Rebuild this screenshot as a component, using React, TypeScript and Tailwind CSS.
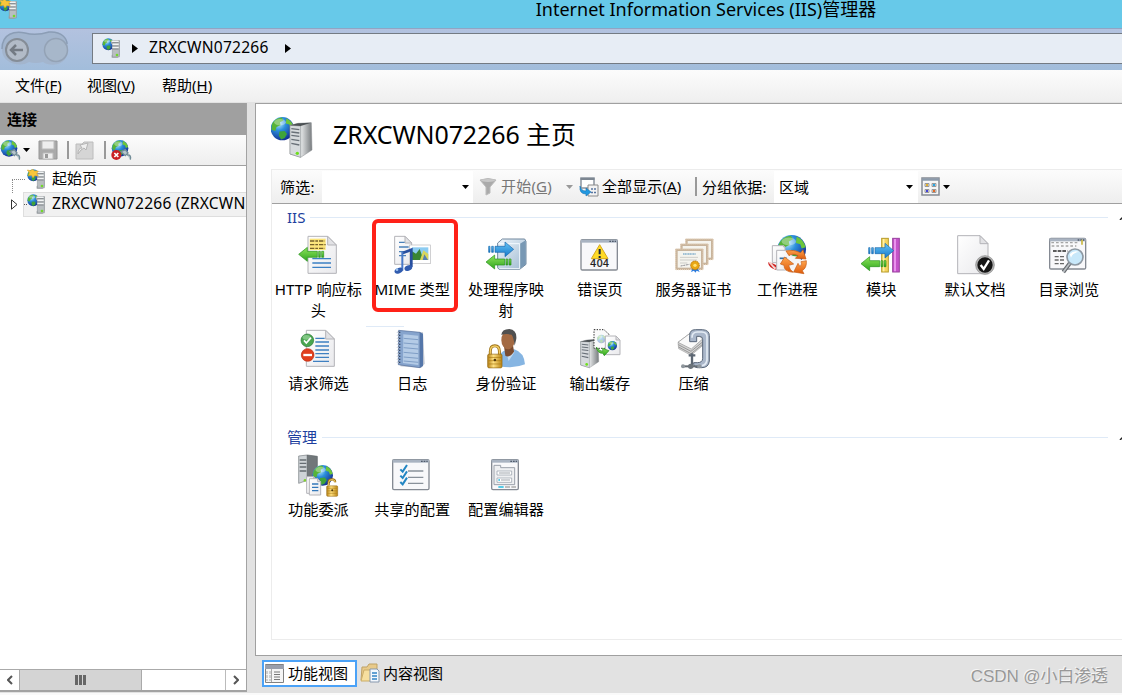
import type { ReactNode } from 'react';

const uiFont = "font-['Noto_Sans','Noto_Sans_CJK_SC',sans-serif]";

function Defs() {
  return (
    <svg width="0" height="0" className="absolute">
      <defs>
        <radialGradient id="globe" cx="35%" cy="28%" r="75%">
          <stop offset="0" stopColor="#b9ebfd" />
          <stop offset="0.4" stopColor="#2c8fdc" />
          <stop offset="1" stopColor="#122f93" />
        </radialGradient>
        <linearGradient id="steel">
          <stop offset="0" stopColor="#8a8f93" />
          <stop offset="0.5" stopColor="#e4e6e7" />
          <stop offset="1" stopColor="#777b7e" />
        </linearGradient>
        <linearGradient id="paper" x2="1" y2="1">
          <stop offset="0" stopColor="#ffffff" />
          <stop offset="1" stopColor="#e9e9ec" />
        </linearGradient>
        <linearGradient id="green" x2="0" y2="1">
          <stop offset="0" stopColor="#8fe55c" />
          <stop offset="1" stopColor="#2fa51f" />
        </linearGradient>
        <linearGradient id="blue" x2="0" y2="1">
          <stop offset="0" stopColor="#65c4f5" />
          <stop offset="1" stopColor="#1779cb" />
        </linearGradient>
        <linearGradient id="gold">
          <stop offset="0" stopColor="#b57f14" />
          <stop offset="0.4" stopColor="#ffe182" />
          <stop offset="1" stopColor="#b98312" />
        </linearGradient>
        <linearGradient id="ice" x2="1" y2="1">
          <stop offset="0" stopColor="#eef5fb" />
          <stop offset="1" stopColor="#9db8d0" />
        </linearGradient>
        <linearGradient id="orange" x2="0" y2="1">
          <stop offset="0" stopColor="#ffa54d" />
          <stop offset="1" stopColor="#de5c0c" />
        </linearGradient>
      </defs>
    </svg>
  );
}

/* Shared pieces, drawn on a 120 unit grid */

function Globe({ x, y, r }: { x: number; y: number; r: number }) {
  return (
    <g transform={`translate(${x} ${y}) scale(${r / 40})`}>
      <circle r="40" fill="url(#globe)" />
      <path d="M-36 -14Q-26 -36 -2 -38L4 -28-8 -22-6 -12-20 -6-24 8-37 4Z" fill="#57b437" />
      <path d="M14 -36Q34 -26 39 -6L28 -2 24 -14 12 -18Z" fill="#6cc63a" />
      <path d="M-10 10L8 8 16 18 8 32-4 37-12 24Z" fill="#3fa33a" />
      <ellipse cx="-8" cy="-22" rx="20" ry="11" fill="#fff" opacity="0.35" />
    </g>
  );
}

function Server({ x, y, s }: { x: number; y: number; s: number }) {
  return (
    <g transform={`translate(${x} ${y}) scale(${s})`}>
      <path d="M0 8L24 2 64 0 66 82 32 104 0 94Z" fill="url(#steel)" stroke="#8b8f92" strokeWidth="1.5" />
      <path d="M0 8L32 10V104L0 94Z" fill="#d6dadd" stroke="#7d8285" strokeWidth="1.5" />
      <path d="M4 18L28 21M4 28L28 31M4 38L28 41M4 50L28 54M4 62L28 67" stroke="#687078" strokeWidth="4" />
      <path d="M0 8L24 2 64 0 32 10Z" fill="#4c5154" />
      <circle cx="22" cy="92" r="5" fill="#6ee01c" />
    </g>
  );
}

function Page({ x, y, w, h, fold = 26 }: { x: number; y: number; w: number; h: number; fold?: number }) {
  return (
    <g strokeLinejoin="round" stroke="#b4b4b8" strokeWidth="3">
      <path d={`M${x} ${y}h${w - fold}l${fold} ${fold}v${h - fold}h${-w}z`} fill="url(#paper)" />
      <path d={`M${x + w - fold} ${y}v${fold}h${fold}z`} fill="#e2e2e5" />
    </g>
  );
}

function WindowFrame({ x, y, w, h }: { x: number; y: number; w: number; h: number }) {
  return (
    <g>
      <rect x={x} y={y} width={w} height={h} rx="4" fill="#f8f8fa" stroke="#858a93" strokeWidth="4" />
      <rect x={x} y={y} width={w} height="9" fill="#a9b3c1" />
      <path d={`M${x + w - 24} ${y + 5}h20`} stroke="#4f5a6b" strokeWidth="4" strokeDasharray="5 3" />
    </g>
  );
}

function ArrowLeft({ x, y }: { x: number; y: number }) {
  return (
    <g transform={`translate(${x} ${y})`} fill="url(#green)" stroke="#249019" strokeWidth="2" strokeLinejoin="round">
      <path d="M0 0L26 -21V-9H56V9H26V21Z" />
      <path d="M60 -9h5V9h-5zM69 -9h6V9h-6z" />
    </g>
  );
}

function ArrowRight({ x, y }: { x: number; y: number }) {
  return (
    <g transform={`translate(${x} ${y})`} fill="url(#blue)" stroke="#1a68ad" strokeWidth="2" strokeLinejoin="round">
      <path d="M0 0L-26 -22V-9H-56V9H-26V22Z" />
      <path d="M-66 -9h5V9h-5zM-75 -9h4V9h-4z" />
    </g>
  );
}

function Padlock({ x, y, s, open }: { x: number; y: number; s: number; open?: boolean }) {
  return (
    <g transform={`translate(${x} ${y}) scale(${s})`}>
      <path d={open ? 'M8 24V12Q8 0 22 0Q34 0 34 12' : 'M8 32V18Q8 0 22 0Q36 0 36 18V32'} fill="none" stroke="#9d7013" strokeWidth="9" />
      <path d={open ? 'M8 24V12Q8 1 22 1Q34 1 34 12' : 'M8 32V18Q8 1 22 1Q36 1 36 18V32'} fill="none" stroke="#f2ce67" strokeWidth="4" />
      <rect x="0" y="26" width="44" height="42" rx="4" fill="url(#gold)" stroke="#91650d" strokeWidth="2" />
      <path d="M3 36H41M3 46H41M3 56H41" stroke="#a8780f" strokeWidth="2" />
      <circle cx="22" cy="44" r="4" fill="#50370a" />
    </g>
  );
}

const icons: Record<string, ReactNode> = {
  headers: (
    <>
      <Page x={30} y={4} w={85} h={111} />
      <rect x="35" y="11" width="48" height="34" fill="#fbe57c" />
      <path d="M36 18H80M36 29H83M36 40H80" stroke="#77622b" strokeWidth="4" strokeDasharray="13 3 8 3" />
      <path d="M43 71H99M43 84H99M43 97H99" stroke="#3b80c4" strokeWidth="4" />
      <ArrowLeft x={2} y={58} />
    </>
  ),
  mime: (
    <>
      <Page x={8} y={4} w={51} h={84} fold={20} />
      <path d="M21 22H38M21 36H50M21 50H50M21 62H42" stroke="#4a80b8" strokeWidth="4" />
      <rect x="53" y="30" width="62" height="56" fill="#fff" stroke="#b9b9bc" strokeWidth="2" />
      <rect x="60" y="37" width="49" height="38" fill="#8cccf2" />
      <path d="M60 75V49L72 56 83 42 95 75Z" fill="#398534" />
      <path d="M84 75L94 46 109 57V75Z" fill="#d8d65f" />
      <path d="M92 75L97 58 108 75Z" fill="#567fb1" />
      <path d="M32 54L58 44V96" fill="none" stroke="#284f9f" strokeWidth="8" />
      <path d="M31 50V107" stroke="#4879c8" strokeWidth="6" />
      <ellipse cx="20" cy="107" rx="13" ry="8" transform="rotate(-22 20 107)" fill="#315caf" />
      <ellipse cx="49" cy="99" rx="12" ry="8" transform="rotate(-22 49 99)" fill="#315caf" />
      <circle cx="15" cy="104" r="4" fill="#9bc2f0" />
    </>
  ),
  handlers: (
    <>
      <path d="M35 24L49 12H116L120 19V88L101 103H39L35 98Z" fill="url(#ice)" stroke="#70879d" strokeWidth="3" />
      <path d="M101 27L119 16V88L101 102Z" fill="#7898b4" />
      <path d="M37 26H101V101H40" fill="none" stroke="#f3faff" strokeWidth="3" />
      <ArrowRight x={83} y={43} />
      <ArrowLeft x={0} y={81} />
    </>
  ),
  errors: (
    <>
      <WindowFrame x={3} y={14} w={109} h={91} />
      <path d="M59 29L84 71H34Z" fill="#ffda24" stroke="#d5a81d" strokeWidth="3" strokeLinejoin="round" />
      <path d="M59 42V58M59 63V69" stroke="#17243b" strokeWidth="6" />
      <text x="59" y="97" textAnchor="middle" fontSize="30" fill="#202020" stroke="#202020" strokeWidth=".7" className="font-['DejaVu_Sans']">404</text>
    </>
  ),
  certs: (
    <>
      {[[34, 11], [19, 26], [4, 41]].map(([x, y]) => (
        <g key={x}>
          <rect x={x} y={y} width="84" height="64" rx="2" fill="#c8b49c" />
          <rect x={x + 1} y={y + 1} width="82" height="62" fill="none" stroke="#ead7bf" strokeWidth="3" strokeDasharray="3 3" />
          <rect x={x + 7} y={y + 7} width="70" height="50" fill="#f5f4ee" />
        </g>
      ))}
      <path d="M27 57H65" stroke="#4f90bc" strokeWidth="3" strokeDasharray="4 1" />
      <path d="M18 67H72M18 75H69M18 84H40" stroke="#cdcdc8" strokeWidth="3" />
      <path d="M20 93L46 88" stroke="#8f8f95" strokeWidth="3" strokeDasharray="6 2" />
      <path d="M56 99L51 111 60 107 64 113 68 107 77 111 70 98Z" fill="#287be1" />
      <circle cx="63" cy="91" r="13" fill="#e9a713" stroke="#b87505" strokeWidth="3" strokeDasharray="4 2" />
      <circle cx="63" cy="91" r="5" fill="#ffe173" />
    </>
  ),
  workers: (
    <>
      <Globe x={74} y={43} r={43} />
      <path d="M3 82Q15 82 38 97L26 104Q5 99 3 82Z" fill="#cf2423" />
      <path d="M4 82L11 80Q20 95 30 99L22 103Z" fill="#f5d6d3" />
      <Page x={16} y={32} w={38} h={51} fold={4} />
      <Page x={29} y={46} w={46} h={59} fold={4} />
      <path d="M38 70H60" stroke="#376fa0" strokeWidth="5" />
      <ellipse cx="78" cy="88" rx="31" ry="25" fill="#f5f5f5" />
      <g fill="url(#orange)" stroke="#c65b14" strokeWidth="2">
        <path d="M57 48Q80 42 101 53L108 44 117 72 85 70 93 62Q76 54 66 62Z" />
        <path d="M53 66L80 87 65 91Q68 105 79 112Q50 110 51 91L40 87Z" />
        <path d="M118 77Q120 98 106 107L111 116 80 111 93 85 99 95Q107 86 102 80Z" />
      </g>
    </>
  ),
  modules: (
    <>
      <rect x="62" y="10" width="20" height="101" fill="#f4d45f" stroke="#b79b2b" strokeWidth="3" />
      <path d="M68 12V109" stroke="#fff1a8" strokeWidth="5" />
      <rect x="95" y="10" width="20" height="101" fill="#c452c9" stroke="#99419e" strokeWidth="3" />
      <path d="M102 12V109" stroke="#f1a0f4" strokeWidth="5" />
      <ArrowRight x={98} y={47} />
      <ArrowLeft x={0} y={86} />
    </>
  ),
  defaultDoc: (
    <>
      <Page x={8} y={2} w={91} h={114} fold={24} />
      <circle cx="90" cy="90" r="28" fill="#b7b7b7" stroke="#7e7e7e" strokeWidth="2" />
      <circle cx="90" cy="90" r="23" fill="#151515" />
      <path d="M77 90L86 102 102 76" fill="none" stroke="#fff" strokeWidth="7" />
    </>
  ),
  browse: (
    <>
      <WindowFrame x={2} y={10} w={108} h={92} />
      <path d="M7 23H90M8 33H82" stroke="#a5a5a5" strokeWidth="4" strokeDasharray="8 6" />
      <path d="M99 14V29" stroke="#cbb941" strokeWidth="5" />
      <path d="M12 48H55" stroke="#292929" strokeWidth="5" strokeDasharray="11 3" />
      <path d="M17 65H45M17 75H45M17 86H45" stroke="#686868" strokeWidth="4" strokeDasharray="12 4" />
      <path d="M63 84L43 111" stroke="#676b70" strokeWidth="12" />
      <path d="M63 84L43 111" stroke="#bbc0c4" strokeWidth="5" />
      <circle cx="78" cy="66" r="24" fill="#c8e8fa" stroke="#8d98a2" strokeWidth="5" />
      <path d="M62 58Q73 45 91 51Q72 52 66 68Z" fill="#fff" />
    </>
  ),
  filtering: (
    <>
      <Page x={25} y={4} w={84} h={108} />
      <path d="M52 28H80M52 39H93M52 51H93M52 63H93M52 74H93M52 85H93M45 97H93" stroke="#3f80c1" strokeWidth="4" />
      <circle cx="28" cy="34" r="19" fill="#4aa650" stroke="#2b7838" strokeWidth="2" />
      <ellipse cx="25" cy="25" rx="11" ry="7" fill="#a7dda6" opacity="0.6" />
      <path d="M18 34L25 42 39 26" fill="none" stroke="#fff" strokeWidth="5" />
      <circle cx="29" cy="78" r="19" fill="#e13e1d" stroke="#b62b11" strokeWidth="2" />
      <path d="M16 78H42" stroke="#fff" strokeWidth="7" />
    </>
  ),
  logging: (
    <>
      <path d="M31 8L93 10 98 104 87 117 25 112Z" fill="#bdc4d0" />
      <path d="M20 4L84 10V116L19 107Z" fill="#86a4cd" stroke="#536d98" strokeWidth="2" />
      <path d="M84 10L93 14V111L84 116Z" fill="#5577aa" />
      <path d="M34 16L79 20V108L33 102Z" fill="#b4cbe6" />
      <path d="M35 28L79 32M35 42L79 46M35 56L79 60M35 70L79 74M35 84L79 88M35 96L79 100" stroke="#7f9ec6" strokeWidth="3" />
      <path d="M21 8V105" stroke="#344665" strokeWidth="8" strokeDasharray="4 5" />
      <path d="M17 9V103" stroke="#d4dce7" strokeWidth="6" strokeDasharray="3 6" />
    </>
  ),
  auth: (
    <>
      <path d="M29 104Q39 67 62 63L85 61Q114 70 117 106Q82 121 35 110Z" fill="#86b5e2" />
      <path d="M60 68L68 96 86 68Z" fill="#c5dcf1" />
      <path d="M54 52L58 80Q70 88 84 68L81 49Z" fill="#7b4c30" />
      <ellipse cx="66" cy="33" rx="20" ry="28" fill="#a36a43" />
      <path d="M46 18Q47 0 70 0Q93 2 91 29L86 50Q83 26 77 17Q58 13 46 18Z" fill="#505050" />
      <Padlock x={5} y={50} s={0.98} />
    </>
  ),
  cache: (
    <>
      <Server x={2} y={31} s={0.82} />
      <path d="M42 2H72L87 16V58H42Z" fill="#fafafa" stroke="#252525" strokeWidth="3" strokeDasharray="4 4" />
      <g opacity="0.35"><Globe x={64} y={30} r={13} /></g>
      <Page x={76} y={21} w={44} h={56} fold={12} />
      <Globe x={97} y={50} r={14} />
      <path d="M49 54Q57 66 68 67L68 58 87 65 73 80 68 73Q53 74 49 54Z" fill="url(#green)" stroke="#278f20" strokeWidth="2" />
    </>
  ),
  compression: (
    <>
      <path d="M12 40L48 13 89 27 88 48 51 79 14 59Z" fill="#d4d4d4" stroke="#a3a3a3" strokeWidth="2" />
      <path d="M12 40L48 13 89 27 52 60Z" fill="#fafafa" stroke="#929292" strokeWidth="2" />
      <path d="M13 47L51 67 87 38M14 54L51 74 87 45" fill="none" stroke="#777" strokeWidth="2" />
      <path d="M47 30V19Q47 2 64 2H85Q106 3 106 20V96Q104 116 83 116H70Q58 115 59 101H70Q86 101 86 88V32Q86 22 76 22H68V38H47Z" fill="#aab7ca" stroke="#596779" strokeWidth="3" />
      <path d="M54 26Q54 9 70 9H83Q99 10 99 23V93Q96 109 84 110" fill="none" stroke="#e3ebf4" strokeWidth="5" />
      <path d="M54 73V112M44 79H64" stroke="#5d6773" strokeWidth="7" />
      <path d="M26 112H72" stroke="#646b72" strokeWidth="6" />
      <circle cx="27" cy="112" r="6" fill="#8e969c" />
      <circle cx="50" cy="112" r="8" fill="#6c747b" />
      <circle cx="76" cy="112" r="6" fill="#8e969c" />
    </>
  ),
  delegation: (
    <>
      <path d="M2 3L28 0V76L2 85Z" fill="#cfd4d7" stroke="#747a7e" strokeWidth="2" />
      <path d="M28 0L58 4V76L28 77Z" fill="#71777a" stroke="#5e6467" strokeWidth="2" />
      <path d="M5 15H25M5 25H25M5 36H25M5 48H25" stroke="#656c72" strokeWidth="4" />
      <circle cx="21" cy="76" r="4" fill="#7ed22b" />
      <Globe x={74} y={61} r={31} />
      <Page x={26} y={65} w={29} h={50} fold={8} />
      <Page x={34} y={71} w={34} h={49} fold={9} />
      <path d="M42 87H61M42 97H61M42 107H61" stroke="#3378ba" strokeWidth="4" />
      <Padlock x={86} y={73} s={0.75} open />
    </>
  ),
  shared: (
    <>
      <WindowFrame x={2} y={14} w={109} h={90} />
      <path d="M48 48H94M48 67H94M48 85H94" stroke="#89919a" strokeWidth="4" />
      <path d="M25 43L32 50 45 30M25 62L32 69 45 49M25 81L32 88 45 68" fill="none" stroke="#2386c3" strokeWidth="6" />
    </>
  ),
  editor: (
    <>
      <WindowFrame x={17} y={14} w={80} h={90} />
      <path d="M24 31H44V38H86V89H24Z" fill="#eff0f2" stroke="#9ba1aa" strokeWidth="3" />
      <path d="M33 48H77V60H33ZM33 69H77V82H33Z" fill="#fff" stroke="#8e97a3" strokeWidth="2" />
      <path d="M39 54H72M45 75H72" stroke="#9fa5ac" strokeWidth="3" />
      <path d="M37 75H42M37 96H53" stroke="#22bce1" strokeWidth="5" />
      <path d="M57 96H72M76 96H90" stroke="#aaa" strokeWidth="5" />
    </>
  ),
};

function Icon({ name }: { name: string }) {
  return (
    <svg viewBox="0 0 120 120" className="size-10 shrink-0 overflow-visible">{icons[name]}</svg>
  );
}

function ServerIcon({ home }: { home?: boolean }) {
  return (
    <svg width="20" height="20" viewBox="0 0 60 60" className="shrink-0">
      <Globe x={19} y={19} r={18} />
      <path d="M27 9L37 6H53V52L47 59H29V52L33 49V18L27 17Z" fill="#a3a7aa" />
      <path d="M31 9H52V57H31Z" fill="#b9bec1" stroke="#858b8f" strokeWidth="1.5" />
      <path d="M29 10H50M31 19H50M31 28H50" stroke="#f1f3f4" strokeWidth="5" />
      <path d="M31 14H50M31 24H50M31 33H50" stroke="#73797e" strokeWidth="2.5" />
      <circle cx="45" cy="51" r="4" fill="#72d82b" />
      {home && <path d="M1 3L10 5 17 1 23 6 34 6 29 14 34 21 23 20 18 27 13 19 4 20 7 11Z" fill="#f7c63c" stroke="#d89b1d" strokeWidth="1.5" />}
    </svg>
  );
}

function HomeServerIcon() {
  return (
    <svg width="42" height="42" viewBox="0 0 126 126" className="shrink-0">
      <Globe x={34} y={38} r={35} />
      <Server x={57} y={20} s={1} />
    </svg>
  );
}

function ConnectIcon({ removed }: { removed?: boolean }) {
  return (
    <svg width="21" height="21" viewBox="0 0 63 63" className="shrink-0">
      <Globe x={27} y={25} r={25} />
      <path d="M30 35L43 29 51 39 43 47ZM48 45Q62 43 58 59" fill="#b6c5cc" stroke="#718c97" strokeWidth="4" />
      {removed && (
        <>
          <circle cx="16" cy="45" r="15" fill="#c91e24" />
          <path d="M10 39L22 51M22 39L10 51" stroke="#fff" strokeWidth="5" />
        </>
      )}
    </svg>
  );
}

function Caret({ className = 'text-black' }: { className?: string }) {
  return (
    <svg width="7" height="4" viewBox="0 0 7 4" className={`shrink-0 ${className}`}><path d="M0 0H7L3.5 4Z" fill="currentColor" /></svg>
  );
}

function Crumb() {
  return <svg width="6" height="9" viewBox="0 0 6 9" className="shrink-0"><path d="M0 0L6 4.5L0 9Z" /></svg>;
}

function Group({ title, items }: { title: string; items: { icon: string; label: string }[] }) {
  return (
    <section>
      <div className="flex h-5 items-center pl-[15px] text-[#1e3f9e]">
        <h2 className="shrink-0 text-[15px] leading-4">{title}</h2>
        <span className="ml-[5px] h-px w-full bg-[#dfeaf7]" />
        <svg width="12" height="6" viewBox="0 0 12 6" className="ml-[11px] mr-[-9px] shrink-0"><path d="M1 6L6 1L11 6" fill="none" stroke="#222" strokeWidth="1.5" /></svg>
      </div>
      <div className="-ml-[0.5px] grid grid-cols-[repeat(9,93.8px)] pt-2">
        {items.map(item => (
          <div key={item.icon} className="flex h-[94px] flex-col items-center">
            <Icon name={item.icon} />
            <span className="mt-1 w-[89px] text-center text-[15.2px] leading-[21px]">{item.label}</span>
          </div>
        ))}
      </div>
    </section>
  );
}

const iisItems = [
  { icon: 'headers', label: 'HTTP 响应标头' },
  { icon: 'mime', label: 'MIME 类型' },
  { icon: 'handlers', label: '处理程序映射' },
  { icon: 'errors', label: '错误页' },
  { icon: 'certs', label: '服务器证书' },
  { icon: 'workers', label: '工作进程' },
  { icon: 'modules', label: '模块' },
  { icon: 'defaultDoc', label: '默认文档' },
  { icon: 'browse', label: '目录浏览' },
  { icon: 'filtering', label: '请求筛选' },
  { icon: 'logging', label: '日志' },
  { icon: 'auth', label: '身份验证' },
  { icon: 'cache', label: '输出缓存' },
  { icon: 'compression', label: '压缩' },
];

const manageItems = [
  { icon: 'delegation', label: '功能委派' },
  { icon: 'shared', label: '共享的配置' },
  { icon: 'editor', label: '配置编辑器' },
];

function Sidebar() {
  return (
    <aside className="mb-px flex w-[247px] shrink-0 flex-col border-r border-b-2 border-[#a3a3a3] bg-white">
      <div className="h-8 shrink-0 bg-[#a0a0a0] pl-[7px] text-[15px] font-bold leading-[33px]">连接</div>
      <div className="flex h-[31px] shrink-0 items-center border-b border-[#a0a0a0] bg-linear-to-b from-[#fcfcfc] to-[#eeeeee]">
        <ConnectIcon />
        <span className="ml-0.5"><Caret /></span>
        <svg width="20" height="20" viewBox="0 0 20 20" className="ml-2 shrink-0">
          <path d="M1 1H19V19H1Z" fill="#aaa" stroke="#969696" />
          <path d="M4 1H16V9H4ZM5 13H15V19H5Z" fill="#eee" stroke="#bbb" />
          <path d="M7 14H10V18H7Z" fill="#999" />
        </svg>
        <span className="ml-[9px] h-[18px] w-0.5 bg-[#999]" />
        <svg width="20" height="20" viewBox="0 0 20 20" className="ml-[5px] shrink-0">
          <path d="M2 4H8L10 2H19V19H2Z" fill="#d5d5d5" stroke="#bcbcbc" />
          <path d="M4 14Q4 8 8 8L6 5L14 3L12 10L10 8Q7 9 4 14Z" fill="#efefef" stroke="#b5b5b5" />
        </svg>
        <span className="ml-[10px] mr-[5px] h-[18px] w-0.5 bg-[#999]" />
        <ConnectIcon removed />
      </div>
      <div className="min-h-0 flex-1 text-[15px]">
        <div className="flex h-[25px] items-center pl-[12px]">
          <span className="mt-[14px] h-[14px] w-[13px] shrink-0 border-l border-t border-dotted border-[#888]" />
          <span className="ml-[2px]"><ServerIcon home /></span>
          <span className="ml-[5px]">起始页</span>
        </div>
        <div className="flex h-[26px] items-center overflow-hidden pl-[11px]">
          <svg width="7" height="11" viewBox="0 0 7 11" className="shrink-0"><path d="M.5 .8L6 5.5L.5 10.2Z" fill="#fff" stroke="#333" /></svg>
          <div className="ml-[5px] flex h-[25px] flex-1 items-center border border-r-0 border-[#dedede] bg-[#f1f1f1]">
            <span className="w-[3px] shrink-0 border-t border-dotted border-[#555]" />
            <ServerIcon />
            <span className="-mt-0.5 ml-[5px] whitespace-nowrap text-[15.6px] leading-5 tracking-[0.2px]">ZRXCWN072266 (ZRXCWN</span>
          </div>
        </div>
      </div>
      <div className="flex h-[21px] shrink-0 border-t border-[#aaa] text-[#555]">
        <span className="grid w-[19px] place-items-center"><svg width="6" height="10" viewBox="0 0 6 10"><path d="M5 1L1 5L5 9" fill="none" stroke="currentColor" strokeWidth="2" /></svg></span>
        <div className="flex w-[123px] items-center justify-center gap-px border-x border-[#aaa] bg-[#d4d4d4]">
          <span className="h-2.5 w-[3px] bg-[#666]" />
          <span className="h-2.5 w-[3px] bg-[#666]" />
          <span className="h-2.5 w-[3px] bg-[#666]" />
        </div>
        <span className="flex-1" />
        <span className="grid w-[21px] place-items-center border-l border-[#bbb]"><svg width="6" height="10" viewBox="0 0 6 10"><path d="M1 1L5 5L1 9" fill="none" stroke="currentColor" strokeWidth="2" /></svg></span>
      </div>
    </aside>
  );
}

function FilterBar() {
  return (
    <div className="flex h-[35px] shrink-0 items-center border-y border-b-[#a0a0a0] border-t-[#ececec] bg-linear-to-b from-[#fcfcfc] to-[#eeeeee] text-[15px] leading-4">
      <span className="w-[50px] shrink-0 whitespace-nowrap pl-2 tracking-[0.2px]">筛选:</span>
      <div className="flex h-8 w-[151px] shrink-0 items-center justify-end bg-white pr-1"><Caret /></div>
      <svg width="18" height="18" viewBox="0 0 18 18" className="ml-[6px] shrink-0"><path d="M1 2Q9 -1 17 2L11 9V15L7 17V9Z" fill="#aaa" stroke="#bbb" /><ellipse cx="9" cy="2.5" rx="7" ry="1.5" fill="#c8c8c8" /></svg>
      <span className="-mt-0.5 ml-1 w-[54px] shrink-0 whitespace-nowrap tracking-[0.2px] text-[#777]">开始(<u>G</u>)</span>
      <span className="ml-[11px]"><Caret className="text-[#999]" /></span>
      <svg width="20" height="20" viewBox="0 0 20 20" className="ml-[6px] shrink-0">
        <path d="M2 1H15V11H2Z" fill="#fff" stroke="#8b949e" strokeWidth="1.5" />
        <path d="M1.5 2H15.5" stroke="#7d8792" strokeWidth="2" />
        <path d="M9 8H19V19H9Z" fill="#f3f3f3" stroke="#8a8a8a" />
        <path d="M12 12H17M12 15.5H17" stroke="#5975a0" strokeWidth="1.5" strokeDasharray="2 1" />
        <path d="M1 9Q2 14 7 14V11L12 15 7 19V17Q0 17 1 9Z" fill="#2198e0" stroke="#1672b4" strokeWidth=".6" />
      </svg>
      <span className="-mt-0.5 ml-[3px] w-[84px] shrink-0 whitespace-nowrap tracking-[0.1px]">全部显示(<u>A</u>)</span>
      <span className="ml-[9px] h-[19px] w-0.5 shrink-0 bg-[#999]" />
      <span className="ml-[5px] w-[72px] shrink-0 whitespace-nowrap tracking-[0.1px]">分组依据:</span>
      <div className="flex h-8 w-[144px] shrink-0 items-center justify-between bg-white pl-[5px] pr-[5px]"><span>区域</span><Caret /></div>
      <svg width="19" height="19" viewBox="0 0 19 19" className="ml-[3px] shrink-0">
        <path d="M1 1H18V18H1Z" fill="#f6f6f6" stroke="#858b93" strokeWidth="1.5" /><path d="M1 2.5H18" stroke="#8c9aaa" strokeWidth="2.5" />
        <path d="M4 6.5H8V9.5H4ZM11 6.5H15V9.5H11ZM4 12.5H8V15.5H4ZM11 12.5H15V15.5H11Z" fill="#ddd" stroke="#999" />
        <path d="M5 7H7V9H5Z" fill="#e2b12e" /><path d="M12 7H14V9H12Z" fill="#26a7e5" /><path d="M5 13H7V15H5Z" fill="#4142d9" /><path d="M12 13H14V15H12Z" fill="#e26926" />
      </svg>
      <span className="ml-[3px]"><Caret /></span>
    </div>
  );
}

export default function App() {
  return (
    <div className={`flex h-[695px] w-[1122px] flex-col overflow-hidden bg-[#fafafa] text-black ${uiFont}`}>
      <Defs />
      <header className="relative flex h-7 shrink-0 justify-center bg-[#67c9e9]">
        <span className="absolute -left-px -top-px"><ServerIcon home /></span>
        <h1 className="-mt-1 ml-[290px] whitespace-nowrap text-[18px] leading-[27px]">Internet Information Services (IIS)管理器</h1>
      </header>
      <nav className="flex h-[42px] shrink-0 border-t border-[#90a5c4] bg-linear-to-b from-[#b3c2df] to-[#a2bddb]">
        <svg width="92" height="41" viewBox="0 0 92 41" className="shrink-0">
          <path d="M2 21C2 4 15 2 25 4Q36 7 49 3C64 2 69 13 68 22C67 37 50 38 43 33Q35 35 29 33C20 39 2 34 2 21Z" fill="#a3b5cd" />
          <path d="M2 20C2 4 15 2 25 4Q36 7 49 3C62 2 67 10 67 15" fill="none" stroke="#8b9db5" strokeWidth="1.5" />
          <circle cx="17" cy="21" r="11" fill="#b2bbc7" stroke="#858d97" strokeWidth="2" />
          <circle cx="56" cy="21" r="11.5" fill="#a7b7ca" stroke="#93a2b5" strokeWidth="1.5" />
          <path d="M11 21H23M16 16L11 21L16 26" fill="none" stroke="#737a83" strokeWidth="2.5" />
        </svg>
        <div className="mt-1 flex h-[31px] flex-1 items-center border border-r-0 border-[#747b83] bg-[#e7edf5] pl-[9px]">
          <span className="-mt-0.5"><ServerIcon /></span>
          <span className="ml-2.5"><Crumb /></span>
          <span className="-mt-1 ml-[11px] w-[120px] whitespace-nowrap text-[15.6px] leading-5 tracking-[0.2px]">ZRXCWN072266</span>
          <span className="ml-4"><Crumb /></span>
        </div>
      </nav>
      <div className="flex h-8 shrink-0 items-center gap-[25px] bg-linear-to-b from-[#fcfcfc] to-[#efefef] pb-0.5 pl-[15px] text-[15px]">
        <span className="w-[47px] whitespace-nowrap">文件(<u>F</u>)</span>
        <span className="w-[50px] whitespace-nowrap">视图(<u>V</u>)</span>
        <span className="whitespace-nowrap">帮助(<u>H</u>)</span>
      </div>
      <div className="flex h-[591px] shrink-0 bg-[#e2e2e2] pt-px">
        <Sidebar />
        <main className="ml-2 flex min-w-0 flex-1 flex-col">
          <div className="flex h-[553px] shrink-0 flex-col overflow-hidden border border-r-0 border-[#a0a0a0] bg-white pl-[15px]">
            <div className="flex h-[65px] shrink-0 items-center">
              <HomeServerIcon />
              <h2 className="-mt-1 ml-[20px] whitespace-nowrap text-[25px] tracking-[-0.1px]">ZRXCWN072266 主页</h2>
            </div>
            <div className="flex h-[471px] flex-col border-b border-l border-[#ececec]">
              <FilterBar />
              <div className="relative pt-[3px]">
                <Group title="IIS" items={iisItems} />
                <div className="mt-1">
                  <Group title="管理" items={manageItems} />
                </div>
                <span className="absolute left-[94px] top-[122px] h-px w-[38px] bg-[#dfeaf7]" />
                <span className="absolute left-[99.5px] top-[15px] h-[93px] w-[86px] rounded-md border-4 border-[#ff2118]" />
              </div>
            </div>
          </div>
          <footer className="flex flex-1 items-center pb-[3px] pl-[7px] text-[15px]">
            <div className="flex h-[27px] w-[95px] items-center border-2 border-[#4ba2f7] bg-white pl-px">
              <svg width="19" height="19" viewBox="0 0 19 19" className="shrink-0"><path d="M.5 .5H18.5V18.5H.5Z" fill="#f5f5f5" stroke="#818181" /><path d="M0 3H19" stroke="#9a9fac" strokeWidth="4" /><path d="M2 7V17M5 7V17" stroke="#aaa" strokeDasharray="3 1" /><path d="M6.5 5V18" stroke="#aaa" /><path d="M9 8H15M9 10.5H15M9 13H15M9 15.5H15" stroke="#777" strokeWidth="1" /></svg>
              <span className="ml-1 whitespace-nowrap">功能视图</span>
            </div>
            <svg width="20" height="20" viewBox="0 0 20 20" className="ml-[3px] shrink-0">
              <path d="M1 17L2 4H7L9 1H17V16Z" fill="#e8ca8a" stroke="#bfa265" /><path d="M1 18L4 7H18L15 18Z" fill="#f6df9f" stroke="#cbad67" />
              <path d="M10 6H17L19 8V19H10Z" fill="#f4f8fd" stroke="#8798ad" /><path d="M12 10H17M12 13H17M12 16H17" stroke="#3484c5" strokeWidth="1.5" />
            </svg>
            <span className="ml-[3px]">内容视图</span>
            <span className="ml-auto mr-3.5 mt-2 whitespace-nowrap text-[17px] tracking-[-0.1px] text-[#989898] [text-shadow:-1px_-1px_0_#f5f5f5] font-['Liberation_Sans','Noto_Sans_CJK_SC',sans-serif]">CSDN @小白渗透</span>
          </footer>
        </main>
      </div>
    </div>
  );
}
